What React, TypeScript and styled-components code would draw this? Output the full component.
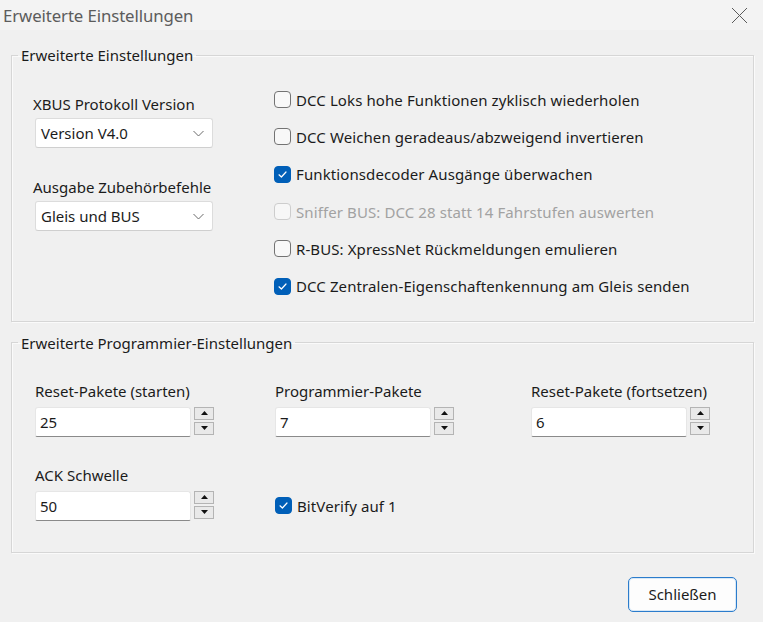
import React from "react";
import styled, { createGlobalStyle } from "styled-components";

const GlobalStyle = createGlobalStyle`
  html, body { margin: 0; padding: 0; background: #f0f0f0; }
  body { font-family: "Noto Sans", "Open Sans", sans-serif; color: #1b1b1b; }
  * { box-sizing: border-box; }
`;

const Window = styled.div`
  width: 763px;
  height: 622px;
  background: #f0f0f0;
  display: flex;
  flex-direction: column;
  overflow: hidden;
`;

const TitleBar = styled.div`
  height: 30px;
  display: flex;
  align-items: center;
  justify-content: space-between;
  padding-left: 3px;
  background: #f3f3f3;
`;

const Title = styled.span`
  font-size: 16.8px;
  color: #5c5c5c;
  letter-spacing: -0.1px;
`;

const CloseBox = styled.div`
  width: 48px;
  height: 30px;
  display: flex;
  align-items: center;
  justify-content: center;
`;

const Body = styled.div`
  padding: 15px 9px 0 11px;
  display: flex;
  flex-direction: column;
  gap: 11px;
`;

const Group = styled.fieldset`
  margin: 0;
  padding: 0;
  min-width: 0;
  border: 1px solid #d6d6d6;
  box-shadow: inset 1px 1px 0 #fafafa, 1px 1px 0 #fafafa;
`;

const Legend = styled.legend`
  margin-left: 6px;
  padding: 0 3px;
  font-size: 15px;
  line-height: 20px;
  color: #1b1b1b;
`;

const TopGrid = styled.div`
  display: grid;
  grid-template-columns: 262px 1fr;
  padding-bottom: 16px;
`;

const LeftCol = styled.div`
  display: flex;
  flex-direction: column;
  padding: 29px 0 0 21px;
`;

const FieldLabel = styled.div`
  font-size: 15px;
  line-height: 20px;
  white-space: nowrap;
`;

const ComboBlock = styled.div`
  display: flex;
  flex-direction: column;
  gap: 4px;
  & + & { margin-top: 29px; }
`;

const Combo = styled.div`
  width: 178px;
  height: 30px;
  margin-left: 2px;
  background: #ffffff;
  border: 1px solid #dcdcdc;
  border-bottom-color: #cfcfcf;
  border-radius: 3px;
  display: flex;
  align-items: center;
  justify-content: space-between;
  padding: 0 8px 0 5px;
  font-size: 15px;
`;

const RightCol = styled.div`
  display: flex;
  flex-direction: column;
  padding-top: 16px;
`;

const CheckRow = styled.label<{ $h?: number }>`
  height: ${(p) => p.$h ?? 37.3}px;
  display: flex;
  align-items: center;
  gap: 5px;
  font-size: 15px;
  white-space: nowrap;
`;

const CheckText = styled.span<{ $disabled?: boolean }>`
  color: ${(p) => (p.$disabled ? "#a2a2a2" : "#1b1b1b")};
  letter-spacing: 0.1px;
`;

const Box = styled.span<{ $checked?: boolean; $disabled?: boolean }>`
  width: 17px;
  height: 17px;
  border-radius: 4px;
  flex: none;
  display: flex;
  align-items: center;
  justify-content: center;
  background: ${(p) => (p.$checked ? "#005fb8" : p.$disabled ? "#f7f7f7" : "#f8f8f8")};
  border: 1px solid
    ${(p) => (p.$checked ? "#005fb8" : p.$disabled ? "#cdcdcd" : "#737373")};
`;

const ProgGrid = styled.div`
  display: grid;
  grid-template-columns: 240px 256px 1fr;
  row-gap: 28px;
  padding: 28px 0 31px 23px;
`;

const Field = styled.div`
  display: flex;
  flex-direction: column;
  gap: 6px;
`;

const SpinRow = styled.div`
  display: flex;
  align-items: flex-start;
  gap: 3px;
  height: 30px;
`;

const Edit = styled.div`
  width: 156px;
  height: 30px;
  background: #ffffff;
  border: 1px solid #e6e6e6;
  border-bottom: 1px solid #8a8a8a;
  border-radius: 3px 3px 2px 2px;
  display: flex;
  align-items: center;
  padding-left: 4px;
  font-size: 15px;
`;

const Spinner = styled.div`
  display: flex;
  flex-direction: column;
  gap: 2px;
`;

const SpinBtn = styled.div`
  width: 20px;
  height: 13px;
  background: #e9e9e9;
  border: 1px solid #b4b4b4;
  display: flex;
  align-items: center;
  justify-content: center;
`;

const CheckCell = styled.div`
  display: flex;
  align-items: flex-end;
`;

const Footer = styled.div`
  display: flex;
  justify-content: flex-end;
  padding: 24px 26px 0 0;
`;

const Button = styled.button`
  width: 109px;
  height: 35px;
  background: #fdfdfd;
  border: 1px solid #2b7ccc;
  box-shadow: inset 0 0 0 1px #d8e8f6;
  border-radius: 5px;
  font-family: "Noto Sans", "Open Sans", sans-serif;
  font-size: 15px;
  color: #1b1b1b;
  padding: 0;
`;

const Check = () => (
  <svg width="11" height="11" viewBox="0 0 11 11">
    <path d="M2 5.8 L4.4 8 L9 3" fill="none" stroke="#ffffff" strokeWidth="1.2" strokeLinecap="round" strokeLinejoin="round" />
  </svg>
);

const Chevron = () => (
  <svg width="11" height="7" viewBox="0 0 11 7">
    <path d="M0.5 1 L5.5 6 L10.5 1" fill="none" stroke="#6a6a6a" strokeWidth="1" />
  </svg>
);

const Tri = ({ up }: { up?: boolean }) => (
  <svg width="7" height="4" viewBox="0 0 7 4">
    <path d={up ? "M0 4 L3.5 0 L7 4 Z" : "M0 0 L7 0 L3.5 4 Z"} fill="#111" />
  </svg>
);

const CheckItem = ({ text, checked, disabled, h }: { text: string; checked?: boolean; disabled?: boolean; h?: number }) => (
  <CheckRow $h={h}>
    <Box $checked={checked} $disabled={disabled}>{checked && <Check />}</Box>
    <CheckText $disabled={disabled}>{text}</CheckText>
  </CheckRow>
);

const SpinField = ({ label, value }: { label: string; value: string }) => (
  <Field>
    <FieldLabel>{label}</FieldLabel>
    <SpinRow>
      <Edit>{value}</Edit>
      <Spinner>
        <SpinBtn><Tri up /></SpinBtn>
        <SpinBtn><Tri /></SpinBtn>
      </Spinner>
    </SpinRow>
  </Field>
);

export default function App() {
  return (
    <Window>
      <GlobalStyle />
      <TitleBar>
        <Title>Erweiterte Einstellungen</Title>
        <CloseBox>
          <svg width="17" height="17" viewBox="0 0 17 17">
            <path d="M1 1 L16 16 M16 1 L1 16" stroke="#5a5a5a" strokeWidth="1" />
          </svg>
        </CloseBox>
      </TitleBar>
      <Body>
        <Group>
          <Legend>Erweiterte Einstellungen</Legend>
          <TopGrid>
            <LeftCol>
              <ComboBlock>
                <FieldLabel>XBUS Protokoll Version</FieldLabel>
                <Combo>
                  <span>Version V4.0</span>
                  <Chevron />
                </Combo>
              </ComboBlock>
              <ComboBlock>
                <FieldLabel>Ausgabe Zubehörbefehle</FieldLabel>
                <Combo>
                  <span>Gleis und BUS</span>
                  <Chevron />
                </Combo>
              </ComboBlock>
            </LeftCol>
            <RightCol>
              <CheckItem text="DCC Loks hohe Funktionen zyklisch wiederholen" />
              <CheckItem text="DCC Weichen geradeaus/abzweigend invertieren" />
              <CheckItem text="Funktionsdecoder Ausgänge überwachen" checked />
              <CheckItem text="Sniffer BUS: DCC 28 statt 14 Fahrstufen auswerten" disabled />
              <CheckItem text="R-BUS: XpressNet Rückmeldungen emulieren" />
              <CheckItem text="DCC Zentralen-Eigenschaftenkennung am Gleis senden" checked />
            </RightCol>
          </TopGrid>
        </Group>
        <Group>
          <Legend>Erweiterte Programmier-Einstellungen</Legend>
          <ProgGrid>
            <SpinField label="Reset-Pakete (starten)" value="25" />
            <SpinField label="Programmier-Pakete" value="7" />
            <SpinField label="Reset-Pakete (fortsetzen)" value="6" />
            <SpinField label="ACK Schwelle" value="50" />
            <CheckCell>
              <CheckItem text="BitVerify auf 1" checked h={30} />
            </CheckCell>
          </ProgGrid>
        </Group>
      </Body>
      <Footer>
        <Button>Schließen</Button>
      </Footer>
    </Window>
  );
}
